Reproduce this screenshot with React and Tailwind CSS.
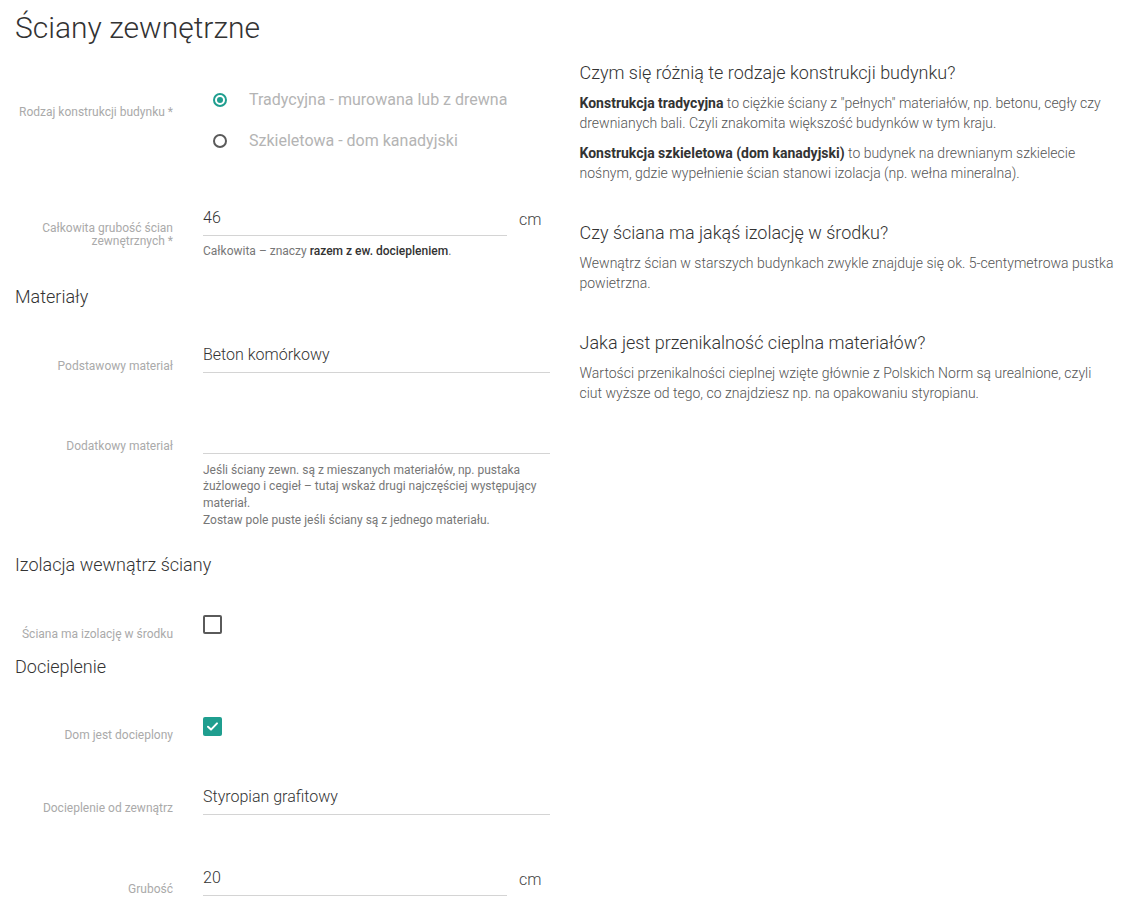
const font = { fontFamily: 'Roboto, "Noto Sans", sans-serif' };

function Label({ children, className = '' }) {
  return (
    <div className={`w-[158px] shrink-0 text-right text-[12px] text-[#aaaaaa] ${className}`}>
      {children}
    </div>
  );
}

function Field({ value, unit }) {
  return (
    <div className="flex">
      <div className={`${unit ? 'w-[304px]' : 'flex-1'} border-b border-[#d4d4d4] pt-[6px] pb-[5px] text-[16px] leading-[24px] font-light text-[#333] h-[36px]`}>
        {value}
      </div>
      {unit && (
        <div className="pl-[12px] pt-[8px] text-[16px] leading-[24px] font-light text-[#444]">
          {unit}
        </div>
      )}
    </div>
  );
}

function Radio({ checked, children }) {
  return (
    <div className="flex items-center h-[24px]">
      <span
        className={`ml-[10px] w-[14px] h-[14px] rounded-full border-2 flex items-center justify-center ${
          checked ? 'border-[#1f9e8f]' : 'border-[#5a5a5a]'
        }`}
      >
        {checked && <span className="w-[6px] h-[6px] rounded-full bg-[#1f9e8f]" />}
      </span>
      <span className="ml-[22px] text-[16px] text-[#b4b4b4]">{children}</span>
    </div>
  );
}

function Checkbox({ checked }) {
  if (checked) {
    return (
      <div className="w-[19px] h-[19px] rounded-[2px] bg-[#1f9e8f] flex items-center justify-center">
        <svg width="13" height="13" viewBox="0 0 13 13" fill="none">
          <path d="M2 6.8 L5 9.6 L11 3.4" stroke="#fff" strokeWidth="2" strokeLinecap="round" strokeLinejoin="round" />
        </svg>
      </div>
    );
  }
  return <div className="w-[19px] h-[19px] rounded-[2px] border-2 border-[#5a5a5a]" />;
}

function Heading({ children, className = '' }) {
  return (
    <h2 className={`text-[18px] leading-[24px] font-light text-[#333] ${className}`}>{children}</h2>
  );
}

export default function App() {
  return (
    <div className="min-h-[912px] bg-white px-[15px]" style={font}>
      <h1 className="pt-[10px] text-[30px] leading-[36px] font-light text-[#333]">
        Ściany zewnętrzne
      </h1>

      <div className="grid grid-cols-2 gap-[30px]">
        {/* formularz */}
        <div>
          <div className="flex gap-[30px] mt-[42px]">
            <Label className="pt-[16px] leading-[16px]">Rodzaj konstrukcji budynku *</Label>
            <div className="flex flex-col gap-[17px]">
              <Radio checked>Tradycyjna - murowana lub z drewna</Radio>
              <Radio>Szkieletowa - dom kanadyjski</Radio>
            </div>
          </div>

          <div className="flex gap-[30px] mt-[47px]">
            <Label className="pt-[22px] leading-[13px]">
              Całkowita grubość ścian zewnętrznych *
            </Label>
            <div className="flex-1">
              <Field value="46" unit="cm" />
              <p className="mt-[7px] text-[12px] leading-[16.5px] text-[#777]">
                Całkowita – znaczy <b className="font-medium text-[#333]">razem z ew. dociepleniem</b>.
              </p>
            </div>
          </div>

          <Heading className="mt-[25px]">Materiały</Heading>

          <div className="flex gap-[30px] mt-[28px]">
            <Label className="pt-[21px] leading-[16px]">Podstawowy materiał</Label>
            <div className="flex-1">
              <Field value="Beton komórkowy" />
            </div>
          </div>

          <div className="flex gap-[30px] mt-[44px]">
            <Label className="pt-[20px] leading-[16px]">Dodatkowy materiał</Label>
            <div className="flex-1">
              <Field value="" />
              <p className="mt-[8px] text-[12px] leading-[16.8px] text-[#777]">
                Jeśli ściany zewn. są z mieszanych materiałów, np. pustaka żużlowego i cegieł – tutaj wskaż drugi najczęściej występujący materiał.
                <br />
                Zostaw pole puste jeśli ściany są z jednego materiału.
              </p>
            </div>
          </div>

          <Heading className="mt-[24px]">Izolacja wewnątrz ściany</Heading>

          <div className="flex gap-[30px] mt-[38px]">
            <Label className="pt-[11px] leading-[16px]">Ściana ma izolację w środku</Label>
            <Checkbox />
          </div>

          <Heading className="mt-[13px]">Docieplenie</Heading>

          <div className="flex gap-[30px] mt-[38px]">
            <Label className="pt-[10px] leading-[16px]">Dom jest docieplony</Label>
            <Checkbox checked />
          </div>

          <div className="flex gap-[30px] mt-[36px]">
            <Label className="pt-[21px] leading-[16px]">Docieplenie od zewnątrz</Label>
            <div className="flex-1">
              <Field value="Styropian grafitowy" />
            </div>
          </div>

          <div className="flex gap-[30px] mt-[44px]">
            <Label className="pt-[21px] leading-[16px]">Grubość</Label>
            <div className="flex-1">
              <Field value="20" unit="cm" />
            </div>
          </div>
        </div>

        {/* pomoc */}
        <div className="pt-[15px] text-[14px] leading-[20px] font-light text-[#555]">
          <Heading>Czym się różnią te rodzaje konstrukcji budynku?</Heading>
          <p className="mt-[8px]">
            <b className="font-bold text-[#333]">Konstrukcja tradycyjna</b> to ciężkie ściany z "pełnych" materiałów, np. betonu, cegły czy drewnianych bali. Czyli znakomita większość budynków w tym kraju.
          </p>
          <p className="mt-[10px]">
            <b className="font-bold text-[#333]">Konstrukcja szkieletowa (dom kanadyjski)</b> to budynek na drewnianym szkielecie nośnym, gdzie wypełnienie ścian stanowi izolacja (np. wełna mineralna).
          </p>

          <Heading className="mt-[38px]">Czy ściana ma jakąś izolację w środku?</Heading>
          <p className="mt-[8px]">
            Wewnątrz ścian w starszych budynkach zwykle znajduje się ok. 5-centymetrowa pustka powietrzna.
          </p>

          <Heading className="mt-[38px]">Jaka jest przenikalność cieplna materiałów?</Heading>
          <p className="mt-[8px]">
            Wartości przenikalności cieplnej wzięte głównie z Polskich Norm są urealnione, czyli ciut wyższe od tego, co znajdziesz np. na opakowaniu styropianu.
          </p>
        </div>
      </div>
    </div>
  );
}
